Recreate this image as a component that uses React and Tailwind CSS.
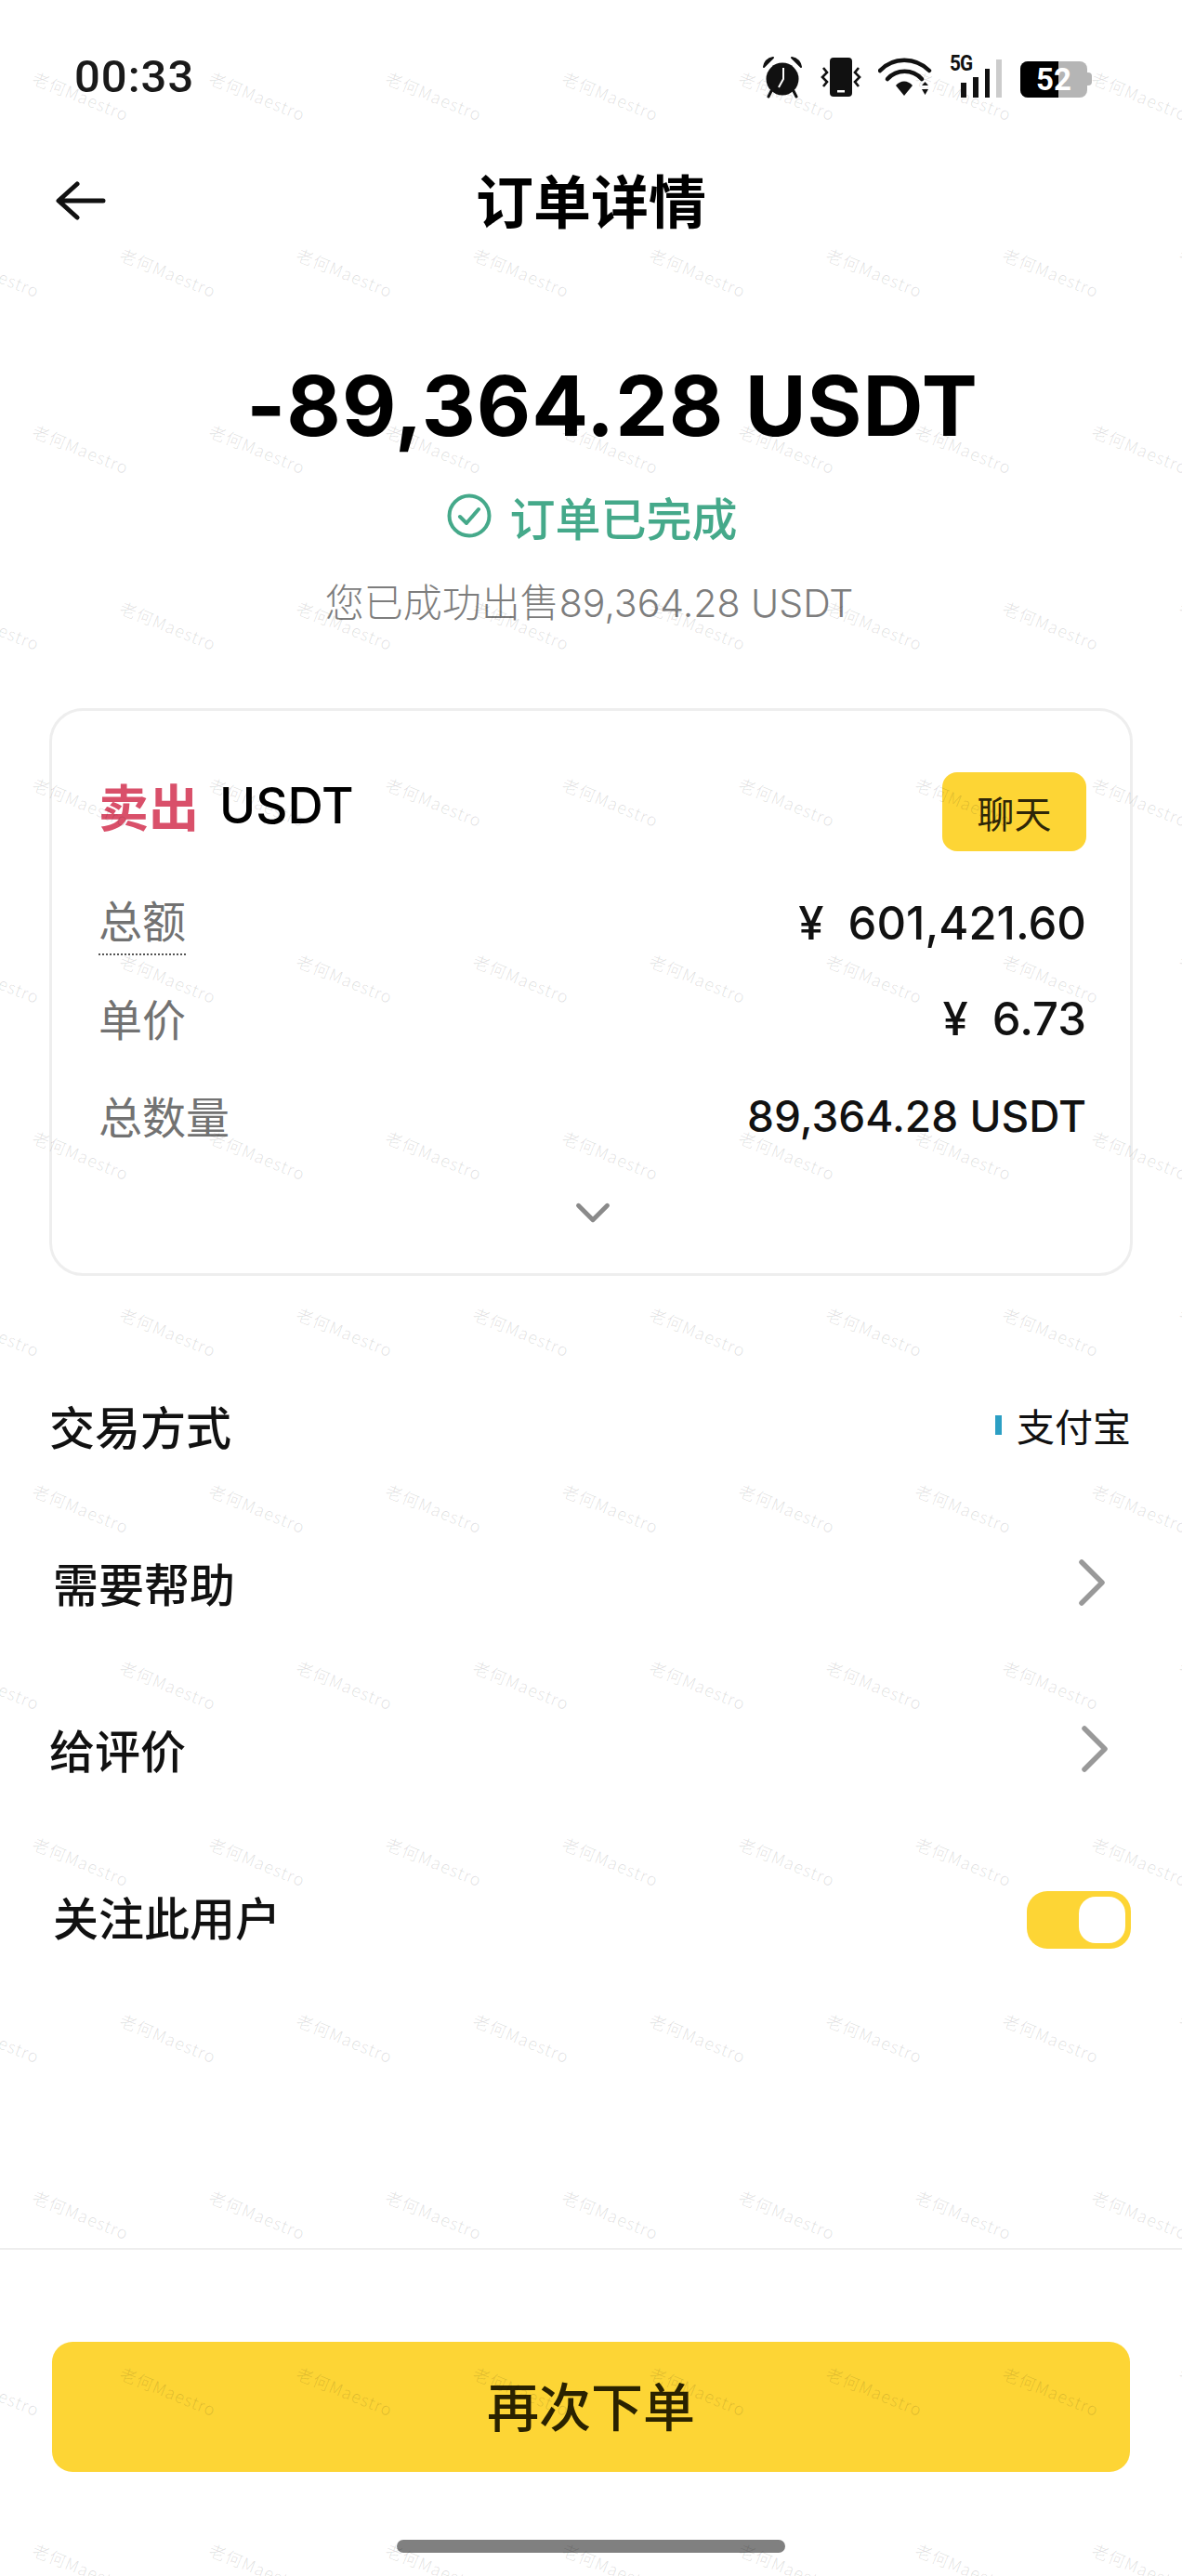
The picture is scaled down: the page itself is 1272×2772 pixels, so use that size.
import { ChevronDown, ChevronRight } from 'lucide-react'

const cjk = '"Noto Sans CJK SC", sans-serif'

// watermark grid: rows 190px apart, every other row shifted by 94px
const marks = []
for (let row = 0; row < 15; row++) {
  for (let col = 0; col < 8; col++) {
    marks.push({ x: (row % 2 ? -9 : 87) + col * 190, y: 103 + row * 190 })
  }
}

function Watermark() {
  return (
    <div className="absolute inset-0 pointer-events-none overflow-hidden">
      {marks.map((m, i) => (
        <span
          key={i}
          className="absolute -translate-x-1/2 -translate-y-1/2 rotate-[22deg] whitespace-nowrap text-[18px] font-light tracking-[1px] text-black/[0.13]"
          style={{ left: m.x, top: m.y }}
        >
          老何Maestro
        </span>
      ))}
    </div>
  )
}

function StatusIcons() {
  return (
    <div className="flex items-center h-[46px]">
      {/* alarm */}
      <svg width="44" height="46" viewBox="0 0 44 46" className="mr-[19px]">
        <circle cx="22" cy="25" r="17.5" fill="#111" />
        <path d="M2 12 C3 6 7 3 12 2 Z M42 12 C41 6 37 3 32 2 Z" fill="#111" stroke="#111" strokeWidth="2" strokeLinejoin="round" />
        <path d="M10 38 L7 44 M34 38 L37 44" stroke="#111" strokeWidth="3" strokeLinecap="round" />
        <path d="M23 13 V25 L18 34" stroke="#fff" strokeWidth="2" fill="none" />
      </svg>
      {/* vibrate */}
      <svg width="44" height="42" viewBox="0 0 44 42" className="mr-[18px]">
        <rect x="10" y="0" width="24" height="42" rx="4" fill="#111" />
        <rect x="18" y="35" width="8" height="2.5" fill="#fff" />
        <path d="M3 11 L7 16 L2 21 L7 26 L3 31 M41 11 L37 16 L42 21 L37 26 L41 31" stroke="#111" strokeWidth="2.6" fill="none" />
      </svg>
      {/* wifi */}
      <svg width="60" height="42" viewBox="0 0 60 42" className="mr-[17px]">
        <path d="M2 14 C16 -1 40 -1 55 14" stroke="#111" strokeWidth="4.5" fill="none" strokeLinecap="round" />
        <path d="M10 23 C20 12 37 12 47 23" stroke="#111" strokeWidth="4.5" fill="none" strokeLinecap="round" />
        <path d="M19 30 L28 41 L37 30 C32 24 24 24 19 30 Z" fill="#111" />
        <path d="M47 30 L54 30 L50.5 26 Z M47 34 L54 34 L50.5 40 Z" fill="#111" />
      </svg>
      {/* 5G + signal */}
      <div className="relative w-[56px] h-[44px] mr-[20px]">
        <span className="absolute left-0 top-[-6px] text-[23px] leading-[28px] font-bold text-[#111] tracking-[-1px] scale-x-90 origin-left font-['Roboto',sans-serif]">5G</span>
        <div className="absolute left-[12px] right-0 bottom-0 flex items-end gap-[7px]">
          <div className="w-[6px] h-[16px] bg-[#111]" />
          <div className="w-[6px] h-[22px] bg-[#111]" />
          <div className="w-[6px] h-[31px] bg-[#111]" />
          <div className="w-[6px] h-[41px] bg-[#ccc]" />
        </div>
      </div>
      {/* battery */}
      <div className="flex items-center">
        <div className="relative w-[72px] h-[39px] rounded-[8px] overflow-hidden flex bg-[#b5b5b5] mt-[4px]">
          <div className="w-[41px] bg-black" />
          <span className="absolute inset-0 flex items-center justify-center text-[33px] leading-none font-bold text-white font-['Roboto',sans-serif]">52</span>
        </div>
        <div className="w-[5px] h-[14px] rounded-r bg-[#b5b5b5] mt-[4px]" />
      </div>
    </div>
  )
}

function Row({ label, value, dashed, valueSize = 'text-[49px]' }) {
  return (
    <div className="flex items-center justify-between h-[105px]">
      <span
        className={`text-[47px] leading-[62px] text-[#727272] ${dashed ? 'pb-[6px] -mb-[2px] border-b-2 border-dotted border-[#555]' : '-mt-[4px]'}`}
        style={{ fontFamily: cjk }}
      >
        {label}
      </span>
      <span className={`${valueSize} font-medium text-[#111] font-['Inter',sans-serif] whitespace-pre`}>{value}</span>
    </div>
  )
}

function ListRow({ label, right, className = '' }) {
  return (
    <div className={`flex items-center justify-between ${className}`}>
      <span className="text-[49px] font-medium text-[#111] leading-none">{label}</span>
      {right}
    </div>
  )
}

export default function App() {
  return (
    <div className="relative flex flex-col w-[1272px] h-[2772px] bg-white overflow-hidden" style={{ fontFamily: cjk }}>
      <div className="flex items-center justify-between pl-[80px] pr-[97px] pt-[60px]">
        <span className="text-[49px] leading-[46px] font-medium tracking-[1px] text-[#1a1a1a] font-['Roboto',sans-serif]">00:33</span>
        <StatusIcons />
      </div>

      <div className="grid grid-cols-[1fr_auto_1fr] items-center pl-[60px] pr-[56px] mt-[58px] h-[100px]">
        <svg width="54" height="42" viewBox="0 0 54 42" fill="none" stroke="#111" strokeLinecap="round" strokeLinejoin="round" strokeWidth="5" className="mt-[4px]">
          <path d="M51 21 H5 M23 3 L3 21 L23 39" />
        </svg>
        <h1 className="text-[62px] leading-none font-bold text-black -ml-[4px]">订单详情</h1>
      </div>

      <div className="flex flex-col items-center mt-[118px]">
        <div className="ml-[46px] text-[90px] leading-[110px] font-bold tracking-[1px] text-black font-['Inter',sans-serif] whitespace-nowrap">-89,364.28 USDT</div>
        <div className="flex items-center gap-[19px] mt-[35px] ml-[3px] h-[56px] text-[#45a98a]">
          <svg width="48" height="48" viewBox="0 0 48 48" fill="none" stroke="currentColor" strokeWidth="4" strokeLinecap="round" strokeLinejoin="round">
            <circle cx="24" cy="24" r="21.5" />
            <path d="M14 25 L21 32 L34 17" />
          </svg>
          <span className="text-[49px] leading-none font-medium">订单已完成</span>
        </div>
        <div className="mt-[35px] -ml-[4px] text-[42px] leading-[56px] text-[#7d7d7d] font-light whitespace-nowrap">
          您已成功出售<span className="text-[41px] font-['Inter',sans-serif]">89,364.28 USDT</span>
        </div>
      </div>

      <div className="mx-[53px] mt-[85px] h-[611px] rounded-[36px] border-[3px] border-[#eeeeee] pl-[50px] pr-[47px] pt-[64px]">
        <div className="flex items-start justify-between h-[96px]">
          <div className="flex items-center gap-[22px] mt-[8px]">
            <span className="text-[54px] leading-[60px] font-bold text-[#d9506a]">卖出</span>
            <span className="text-[53px] leading-[60px] font-medium text-black font-['Inter',sans-serif]">USDT</span>
          </div>
          <button className="w-[155px] h-[85px] mt-[2px] rounded-[16px] bg-[#fdd535] text-[40px] text-[#2e2608]">聊天</button>
        </div>
        <div className="mt-[14px]">
          <Row label="总额" value="¥  601,421.60" dashed valueSize="text-[49px] mt-[5px]" />
          <Row label="单价" value="¥  6.73" />
          <Row label="总数量" value="89,364.28 USDT" valueSize="text-[46px]" />
        </div>
        <div className="flex justify-center mt-[20px]">
          <ChevronDown size={62} strokeWidth={1.9} className="text-[#8a8a8a]" />
        </div>
      </div>

      <div className="flex flex-col pl-[53px] pr-[55px]">
        <ListRow
          className="mt-[136px]"
          label="交易方式"
          right={
            <div className="flex items-center gap-[16px]">
              <div className="w-[7px] h-[21px] bg-[#2c9fc4]" />
              <span className="text-[41px] leading-none text-[#111]">支付宝</span>
            </div>
          }
        />
        <ListRow className="mt-[120px] pl-[4px]" label="需要帮助" right={<ChevronRight size={88} strokeWidth={1.5} className="text-[#999] -my-[20px] -mr-[2px]" />} />
        <ListRow className="mt-[130px]" label="给评价" right={<ChevronRight size={88} strokeWidth={1.5} className="text-[#999] -my-[20px] -mr-[5px]" />} />
        <ListRow
          className="mt-[124px] pl-[4px]"
          label="关注此用户"
          right={
            <div className="flex items-center justify-end w-[112px] h-[62px] translate-y-[5px] rounded-[22px] bg-[#fdd535] pr-[6px]">
              <div className="w-[50px] h-[50px] rounded-[18px] bg-white" />
            </div>
          }
        />
      </div>

      <div className="flex-1" />
      <div className="h-[2px] bg-[#eeeeee]" />
      <button className="mx-[56px] mt-[99px] h-[140px] pb-[6px] rounded-[22px] bg-[#fdd535] text-[56px] font-medium text-[#2a2200]">再次下单</button>
      <div className="self-center mt-[73px] mb-[25px] w-[418px] h-[14px] rounded-full bg-[#808080]" />

      <Watermark />
    </div>
  )
}
